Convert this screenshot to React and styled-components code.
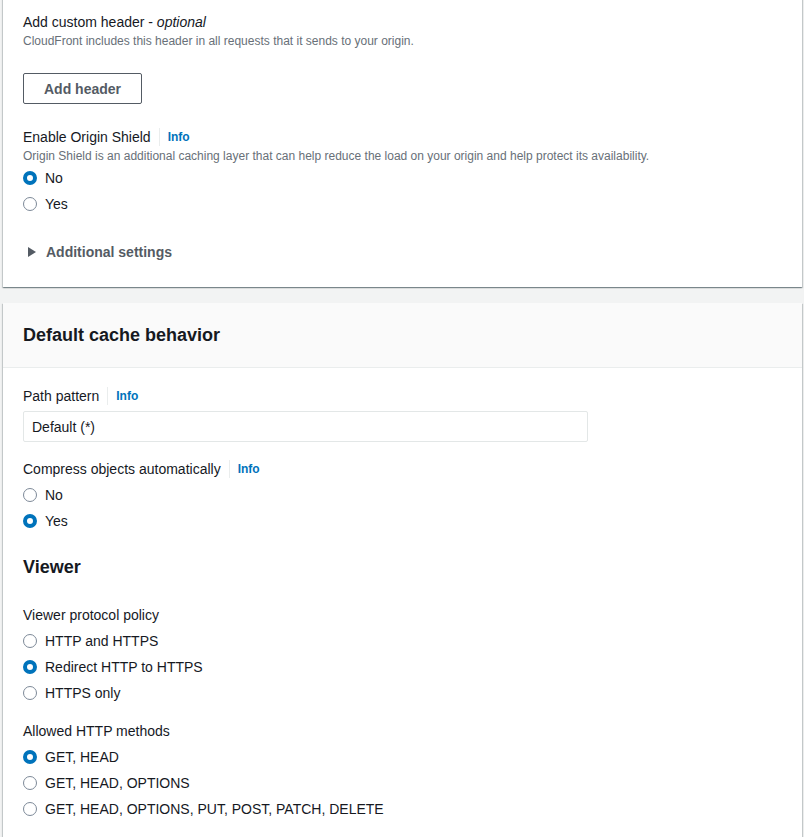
import React from "react";
import styled, { createGlobalStyle } from "styled-components";

const Global = createGlobalStyle`
  html, body { margin: 0; padding: 0; background: #f2f3f3; }
  body { font-family: "Liberation Sans", Arial, sans-serif; color: #16191f; overflow: hidden; }
`;

const Page = styled.div`
  display: flex;
  flex-direction: column;
  gap: 16px;
  padding: 0 2px 0 3px;
  width: 804px;
  height: 837px;
  box-sizing: border-box;
  overflow: hidden;
`;

const Card = styled.section`
  background: #fff;
  box-shadow: 0 1px 1px 0 rgba(0, 28, 36, 0.3), 1px 1px 1px 0 rgba(0, 28, 36, 0.15),
    -1px 1px 1px 0 rgba(0, 28, 36, 0.15);
  margin-top: ${(p) => p.$mt || 0}px;
  flex-shrink: 0;
`;

const CardHeader = styled.div`
  background: #fafafa;
  border-bottom: 1px solid #eaeded;
  padding: 21px 20px 21px;
`;

const CardTitle = styled.h2`
  margin: 0;
  font-size: 18px;
  line-height: 22px;
  font-weight: 700;
  color: #16191f;
`;

const CardBody = styled.div`
  padding: ${(p) => p.$pad};
  display: flex;
  flex-direction: column;
  align-items: flex-start;
`;

const Field = styled.div`
  display: flex;
  flex-direction: column;
  align-items: flex-start;
  margin-top: ${(p) => p.$mt || 0}px;
`;

const LabelRow = styled.div`
  display: flex;
  align-items: center;
  font-size: 14px;
  line-height: 22px;
  color: #16191f;
`;

const Optional = styled.i`
  font-style: italic;
`;

const InfoLink = styled.a`
  display: inline-flex;
  align-items: center;
  margin-left: 8px;
  padding-left: 8px;
  border-left: 1px solid #eaeded;
  height: 18px;
  font-size: 12px;
  font-weight: 700;
  color: #0073bb;
  text-decoration: none;
`;

const Description = styled.div`
  font-size: 12px;
  line-height: 17px;
  color: #687078;
`;

const Button = styled.button`
  margin-top: ${(p) => p.$mt || 0}px;
  height: 31px;
  padding: 0 20px;
  border: 1px solid #545b64;
  border-radius: 2px;
  background: #fff;
  color: #545b64;
  font-family: inherit;
  font-size: 14px;
  font-weight: 700;
`;

const RadioGroup = styled.div`
  display: flex;
  flex-direction: column;
  gap: 4px;
  margin-top: ${(p) => p.$mt || 0}px;
`;

const RadioRow = styled.label`
  display: flex;
  align-items: center;
  gap: 8px;
  height: 22px;
  font-size: 14px;
  color: #16191f;
`;

const RadioDot = styled.span`
  width: 14px;
  height: 14px;
  border-radius: 50%;
  box-sizing: border-box;
  background: #fff;
  border: ${(p) => (p.$checked ? "4px solid #0073bb" : "1.5px solid #7d8998")};
  flex-shrink: 0;
`;

const Expander = styled.div`
  display: flex;
  align-items: center;
  gap: 10px;
  margin-top: ${(p) => p.$mt || 0}px;
  padding-left: 5px;
  height: 22px;
  font-size: 14px;
  font-weight: 700;
  color: #545b64;
`;

const Input = styled.div`
  margin-top: 4px;
  width: 565px;
  height: 31px;
  box-sizing: border-box;
  border: 1px solid #e3e7e7;
  border-radius: 2px;
  padding: 0 8px;
  display: flex;
  align-items: center;
  font-size: 14px;
  color: #16191f;
  background: #fff;
`;

const SubHeading = styled.h3`
  margin: ${(p) => p.$mt || 0}px 0 0;
  font-size: 18px;
  line-height: 22px;
  font-weight: 700;
  color: #16191f;
`;

function Radios({ options, value, mt }) {
  return (
    <RadioGroup $mt={mt}>
      {options.map((o) => (
        <RadioRow key={o}>
          <RadioDot $checked={o === value} />
          {o}
        </RadioRow>
      ))}
    </RadioGroup>
  );
}

function Label({ children, info }) {
  return (
    <LabelRow>
      {children}
      {info && <InfoLink href="#">Info</InfoLink>}
    </LabelRow>
  );
}

export default function App() {
  return (
    <>
      <Global />
      <Page>
        <Card $mt={-3}>
          <CardBody $pad="14px 20px 24px">
            <Field>
              <Label>
                Add custom header -&nbsp;<Optional>optional</Optional>
              </Label>
              <Description>CloudFront includes this header in all requests that it sends to your origin.</Description>
              <Button $mt={23}>Add header</Button>
            </Field>
            <Field $mt={22}>
              <Label info>Enable Origin Shield</Label>
              <Description>
                Origin Shield is an additional caching layer that can help reduce the load on your origin and help protect its availability.
              </Description>
              <Radios mt={2} options={["No", "Yes"]} value="No" />
            </Field>
            <Expander $mt={26}>
              <svg width="8" height="10" viewBox="0 0 8 10">
                <path d="M0 0 L8 5 L0 10 Z" fill="#545b64" />
              </svg>
              Additional settings
            </Expander>
          </CardBody>
        </Card>
        <Card>
          <CardHeader>
            <CardTitle>Default cache behavior</CardTitle>
          </CardHeader>
          <CardBody $pad="17px 20px 40px">
            <Field>
              <Label info>Path pattern</Label>
              <Input>Default (*)</Input>
            </Field>
            <Field $mt={16}>
              <Label info>Compress objects automatically</Label>
              <Radios mt={4} options={["No", "Yes"]} value="Yes" />
            </Field>
            <SubHeading $mt={24}>Viewer</SubHeading>
            <Field $mt={26}>
              <Label>Viewer protocol policy</Label>
              <Radios
                mt={4}
                options={["HTTP and HTTPS", "Redirect HTTP to HTTPS", "HTTPS only"]}
                value="Redirect HTTP to HTTPS"
              />
            </Field>
            <Field $mt={16}>
              <Label>Allowed HTTP methods</Label>
              <Radios
                mt={4}
                options={["GET, HEAD", "GET, HEAD, OPTIONS", "GET, HEAD, OPTIONS, PUT, POST, PATCH, DELETE"]}
                value="GET, HEAD"
              />
            </Field>
          </CardBody>
        </Card>
      </Page>
    </>
  );
}
